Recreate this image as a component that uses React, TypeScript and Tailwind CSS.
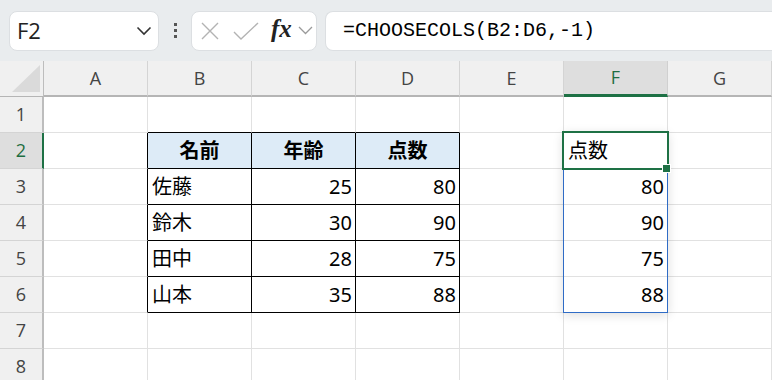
import React from "react";

const COLS = ["A", "B", "C", "D", "E", "F", "G"];
const ROWS = [1, 2, 3, 4, 5, 6, 7, 8];

type CellDef = { text: string; align: "left" | "right" | "center"; bold?: boolean };

const DATA: Record<string, CellDef> = {
  B2: { text: "名前", align: "center", bold: true },
  C2: { text: "年齢", align: "center", bold: true },
  D2: { text: "点数", align: "center", bold: true },
  F2: { text: "点数", align: "left" },
  B3: { text: "佐藤", align: "left" },
  C3: { text: "25", align: "right" },
  D3: { text: "80", align: "right" },
  F3: { text: "80", align: "right" },
  B4: { text: "鈴木", align: "left" },
  C4: { text: "30", align: "right" },
  D4: { text: "90", align: "right" },
  F4: { text: "90", align: "right" },
  B5: { text: "田中", align: "left" },
  C5: { text: "28", align: "right" },
  D5: { text: "75", align: "right" },
  F5: { text: "75", align: "right" },
  B6: { text: "山本", align: "left" },
  C6: { text: "35", align: "right" },
  D6: { text: "88", align: "right" },
  F6: { text: "88", align: "right" },
};

const FONT = { fontFamily: '"Noto Sans", "Noto Sans CJK JP", sans-serif' };

function Cell({ r, c }: { r: number; c: string }) {
  const inTableCol = c === "B" || c === "C" || c === "D";
  const blackRight = (inTableCol || c === "A") && r >= 2 && r <= 6;
  const blackBottom = inTableCol && r >= 1 && r <= 6;
  const head = r === 2 && inTableCol;
  const d = DATA[c + r];
  const cls = [
    "h-9 border-r border-b flex items-center text-[20px] leading-none text-black overflow-hidden",
    blackRight ? "border-r-black" : "border-r-[#e1e1e1]",
    blackBottom ? "border-b-black" : "border-b-[#e1e1e1]",
    head ? "bg-[#ddebf7]" : "bg-white",
    d?.align === "right" ? "justify-end pr-[3px]" : d?.align === "center" ? "justify-center" : "justify-start pl-[4px]",
    d?.bold ? "font-bold" : "font-normal",
  ].join(" ");
  return (
    <div className={cls} style={FONT}>
      {d ? <span className="pt-[1px]">{d.text}</span> : null}
    </div>
  );
}

export default function App() {
  return (
    <div className="w-[772px] h-[380px] overflow-hidden bg-white relative">
      {/* toolbar */}
      <div className="h-[61px] bg-[#e9ecee] flex items-center pl-[9px] gap-0">
        <div className="w-[150px] h-[40px] bg-white rounded-[8px] border border-[#dcdfe2] flex items-center justify-between pl-[7px] pr-[6px]">
          <span className="text-[22px] text-[#222]" style={{ fontFamily: '"Open Sans", "Noto Sans", sans-serif' }}>F2</span>
          <svg width="16" height="10" viewBox="0 0 16 10">
            <path d="M1.5 1.5 L8 8 L14.5 1.5" fill="none" stroke="#333" strokeWidth="1.6" />
          </svg>
        </div>
        <div className="w-[32px] flex flex-col items-center gap-[3px]">
          <div className="w-[3px] h-[3px] bg-[#555]" />
          <div className="w-[3px] h-[3px] bg-[#555]" />
          <div className="w-[3px] h-[3px] bg-[#555]" />
        </div>
        <div className="w-[126px] h-[40px] bg-white rounded-[8px] border border-[#dcdfe2] flex items-center pl-[8px]">
          <svg width="20" height="20" viewBox="0 0 20 20" className="mr-[13px]">
            <path d="M2 2 L18 18 M18 2 L2 18" stroke="#b3b3b3" strokeWidth="1.4" fill="none" />
          </svg>
          <svg width="26" height="20" viewBox="0 0 26 20" className="mr-[12px]">
            <path d="M1 11 L8 18 L25 2" stroke="#b3b3b3" strokeWidth="1.4" fill="none" />
          </svg>
          <span className="text-[25px] italic font-bold text-[#222] leading-none mr-[6px] -mt-[4px]" style={{ fontFamily: '"Liberation Serif", serif' }}>fx</span>
          <svg width="15" height="9" viewBox="0 0 15 9">
            <path d="M1 1 L7.5 7.5 L14 1" fill="none" stroke="#9a9a9a" strokeWidth="1.3" />
          </svg>
        </div>
        <div className="ml-[8px] flex-1 h-[40px] bg-white rounded-l-[8px] border border-r-0 border-[#dcdfe2] flex items-center pl-[17px]">
          <span className="text-[20px] text-black" style={{ fontFamily: '"Liberation Mono", monospace' }}>=CHOOSECOLS(B2:D6,-1)</span>
        </div>
      </div>

      {/* grid */}
      <div className="relative">
        <div className="grid grid-cols-[44px_repeat(7,104px)]">
          {/* corner */}
          <div className="h-9 bg-[#f0f0f0] border-r border-b border-r-[#bdbdbd] border-b-[#b5b5b5] relative">
            <svg width="30" height="28" viewBox="0 0 30 28" className="absolute left-[12px] top-[4px]">
              <path d="M28 0 L28 27 L0 27 Z" fill="#dadada" />
            </svg>
          </div>
          {COLS.map((c) => (
            <div
              key={c}
              className={
                "h-9 flex items-center justify-center text-[18px] border-r " +
                (c === "F"
                  ? "bg-[#dedede] text-[#1e6e42] border-b-[3px] border-b-[#1e7145] border-r-[#d0d0d0]"
                  : "bg-[#f0f0f0] text-[#444] border-b-2 border-b-[#b5b5b5] border-r-[#d4d4d4]")
              }
              style={{ fontFamily: '"Open Sans", "Noto Sans", sans-serif' }}
            >
              {c}
            </div>
          ))}
          {ROWS.map((r) => (
            <React.Fragment key={r}>
              <div
                className={
                  "h-9 flex items-center justify-center text-[18px] border-b border-b-[#d4d4d4] " +
                  (r === 2
                    ? "bg-[#dedede] text-[#1e6e42] border-r-[2px] border-r-[#1e7145]"
                    : "bg-[#f0f0f0] text-[#444] border-r-[2px] border-r-[#bdbdbd]")
                }
                style={{ fontFamily: '"Open Sans", "Noto Sans", sans-serif' }}
              >
                {r}
              </div>
              {COLS.map((c) => (
                <Cell key={c + r} r={r} c={c} />
              ))}
            </React.Fragment>
          ))}
        </div>

        {/* spill range border */}
        <div className="absolute left-[563px] top-[71px] w-[105px] h-[181px] border border-[#2f6cc6] shadow-[0_2px_10px_rgba(0,0,0,0.14)] pointer-events-none" />
        {/* active cell */}
        <div className="absolute left-[562px] top-[70px] w-[107px] h-[39px] border-2 border-[#1e7145] pointer-events-none" />
        {/* fill handle */}
        <div className="absolute left-[663px] top-[104px] w-[7px] h-[7px] bg-[#1e7145] outline outline-1 outline-white pointer-events-none" />
      </div>
    </div>
  );
}
